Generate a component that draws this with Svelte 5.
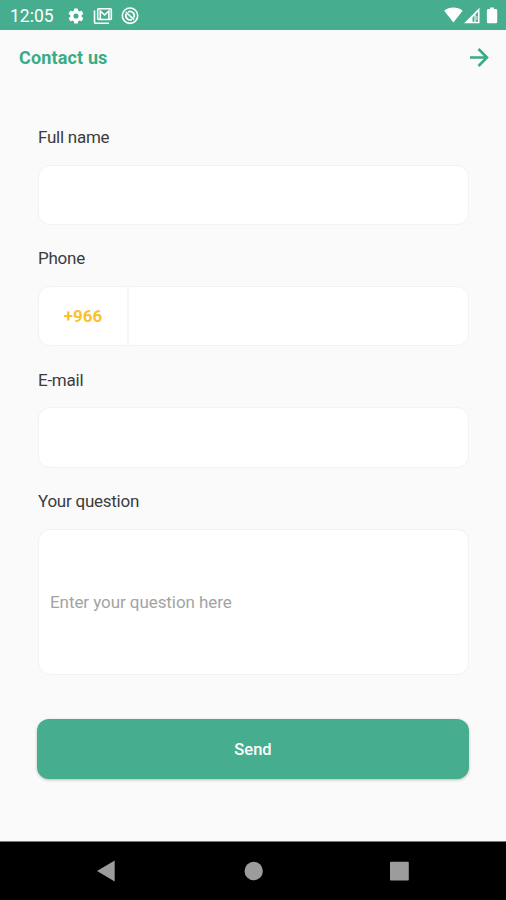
<script>
    let name = ""
    let phone = ""
    let email = ""
    let question = ""
</script>

<div class="screen">
    <div class="status">
        <span class="time">12:05</span>
        <svg class="gear" width="18" height="18" viewBox="0 0 24 24">
            <path fill="#fff" d="M19.4 13c.1-.6.1-1.400 0-2l2.100-1.600c.2-.2.3-.4.1-.7l-2-3.400c-.1-.2-.4-.3-.6-.2l-2.500 1c-.5-.4-1.100-.7-1.700-1l-.4-2.600c0-.3-.2-.5-.5-.5h-4c-.3 0-.5.2-.5.5L9 5.100c-.6.3-1.200.6-1.700 1l-2.500-1c-.2-.1-.5 0-.6.2l-2 3.400c-.1.3 0 .5.1.7L4.500 11c-.1.600-.1 1.400 0 2l-2.100 1.600c-.2.200-.2.400-.1.700l2 3.400c.1.200.4.300.6.200l2.500-1c.5.400 1.100.7 1.700 1l.4 2.600c0 .3.2.5.5.5h4c.3 0 .5-.2.5-.5l.4-2.600c.6-.3 1.200-.6 1.700-1l2.500 1c.2.1.5 0 .6-.2l2-3.400c.1-.3.1-.5-.1-.7zM12 15.400a3.400 3.400 0 1 1 0-6.800 3.400 3.400 0 0 1 0 6.800z" fill-rule="evenodd" />
        </svg>
        <svg class="mail" width="20" height="18" viewBox="0 0 20 18" fill="none" stroke="#fff">
            <path d="M1.500 3.500v11.700q0 1 1 1H16" stroke-width="1.600" />
            <rect x="4.700" y="1.700" width="13.600" height="10.800" rx="1" stroke-width="1.600" />
            <path d="M7.300 12V4l4.300 4 4.300-4v8" stroke-width="1.600" />
        </svg>
        <svg class="dnd" width="18" height="18" viewBox="0 0 18 18" fill="none" stroke="#fff">
            <circle cx="9" cy="8.700" r="7.700" stroke-width="1.600" />
            <path d="M5.200 6.800a4.300 4.300 0 0 0 5.700 5.700M7 4.900a4.300 4.300 0 0 1 5.800 5.700" stroke-width="1.700" />
            <path d="M4.800 5l8.200 7.700" stroke-width="1.700" />
        </svg>
        <span class="space"></span>
        <svg width="54" height="18" viewBox="0 0 54 18">
            <path fill="#fff" d="M.2 3.700C5.300-.5 13.500-.5 18.600 3.700L9.400 15.500z" />
            <path fill="#fff" fill-rule="evenodd" d="M20 16.200L35.500.7V16.200zM28.500 10.500V14.700h2V8.500zM31.600 7.200V14.700H34V4.800z" />
            <path fill="#fff" opacity=".75" d="M32.400 9h1v4h-1z" />
            <path fill="#fff" d="M46.200.5h3.600v1.600h2q1.400 0 1.400 1.400V15q0 1.300-1.300 1.300h-7.700q-1.300 0-1.300-1.300V3.500q0-1.400 1.400-1.400h1.900z" />
        </svg>
    </div>

    <header>
        <h1>Contact us</h1>
        <svg width="20" height="20" viewBox="0 0 20 20" fill="none" stroke="#3bab84" stroke-width="2.600">
            <path d="M1 9.500h16.500M9.500 1l8.500 8.500-8.500 8.500" />
        </svg>
    </header>

    <form>
        <label for="name">Full name</label>
        <input id="name" class="box" bind:value={name} />

        <label for="phone">Phone</label>
        <div class="box phone">
            <span class="code">+966</span>
            <input id="phone" bind:value={phone} />
        </div>

        <label for="email">E-mail</label>
        <input id="email" class="box" bind:value={email} />

        <label for="question">Your question</label>
        <input id="question" class="box question" placeholder="Enter your question here" bind:value={question} />

        <button type="button">Send</button>
    </form>

    <nav>
        <svg width="506" height="58" viewBox="0 0 506 58" fill="#9c9c9c">
            <path d="M97 29l17.700-10.500v21z" />
            <circle cx="253.700" cy="29" r="9.200" />
            <rect x="390" y="19.700" width="18.800" height="18.800" rx="1" />
        </svg>
    </nav>
</div>

<style>
    :global(body) {
        background: #fafafa;
    }

    .screen {
        display: flex;
        flex-direction: column;
        width: 506px;
        height: 900px;
        box-sizing: border-box;
        background: #fafafa;
        font-family: Roboto, "Open Sans", sans-serif;
    }

    .status {
        display: flex;
        align-items: center;
        height: 30px;
        padding: 1px 8px 0 10px;
        box-sizing: border-box;
        background: #46ae8e;
        color: #fff;
    }

    .time {
        width: 57px;
        font-size: 17.5px;
        line-height: 28px;
    }

    .mail {
        margin-left: 8px;
    }

    .dnd {
        margin-left: 8px;
    }

    .space {
        flex: 1;
    }

    header {
        display: flex;
        justify-content: space-between;
        align-items: center;
        height: 55px;
        padding: 0 17px 0 19px;
    }

    h1 {
        margin: 0;
        font-size: 18px;
        font-weight: 700;
        letter-spacing: 0.15px;
        color: #3bab84;
    }

    form {
        display: flex;
        flex-direction: column;
        flex: 1;
        padding: 41px 37px 0 38px;
    }

    label {
        height: 22px;
        margin-bottom: 16.500px;
        font-size: 17px;
        line-height: 22px;
        letter-spacing: -0.25px;
        color: #3c3c3c;
    }

    .box {
        height: 60.500px;
        margin: 0 0 22.400px;
        padding: 0 11px;
        box-sizing: border-box;
        border: 1px solid #f2f2f2;
        border-radius: 12px;
        background: #fff;
        font: 17px Roboto, "Open Sans", sans-serif;
        outline: none;
    }

    .phone {
        display: flex;
        padding: 0;
    }

    .code {
        width: 90px;
        box-sizing: border-box;
        border-right: 2px solid #f5f5f5;
        text-align: center;
        font-weight: 700;
        line-height: 58px;
        color: #fbc02d;
    }

    .phone input {
        flex: 1;
        min-width: 0;
        border: 0;
        background: none;
        outline: none;
    }

    .question {
        height: 146px;
        margin-bottom: 44.5px;
        letter-spacing: -0.07px;
    }

    .question::placeholder {
        color: #a3a3a3;
        opacity: 1;
    }

    button {
        height: 60px;
        margin-left: -1px;
        padding: 0;
        border: 0;
        border-radius: 12px;
        background: #46ae8e;
        box-shadow: 0 1px 3px rgba(0, 0, 0, 0.25);
        color: #fff;
        font: 500 16.5px Roboto, "Open Sans", sans-serif;
    }

    nav {
        height: 58px;
        border-top: 1px solid #777;
        background: #000;
    }

    nav svg {
        display: block;
    }
</style>
